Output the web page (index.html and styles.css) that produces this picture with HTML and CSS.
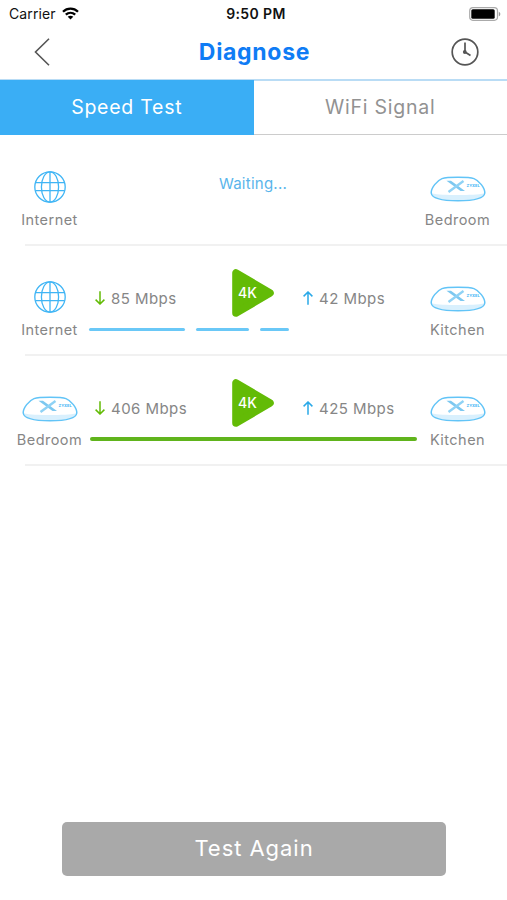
FILE: index.html
```html
<!DOCTYPE html>
<html lang="en">
<head>
  <meta charset="UTF-8" />
  <meta name="viewport" content="width=device-width, initial-scale=1" />
  <title>Diagnose</title>
  <link rel="stylesheet" href="styles.css">
</head>
<body>
  <svg class="defs" width="0" height="0">
    <symbol id="globe" viewBox="0 0 32 32">
      <g fill="none" stroke="#3fb5f5" stroke-width="1.3">
        <circle cx="16" cy="16" r="15.2" />
        <ellipse cx="16" cy="16" rx="8.6" ry="15.2" />
        <path d="M16 .8v30.4M1.6 11.7h28.8M1.6 19.7h28.8" />
      </g>
    </symbol>
    <symbol id="router" viewBox="0 0 56 26">
      <path d="M2 17.5C12 19.5 44 19.5 54 17.5C53 23 43 24.8 28 24.8S3 23 2 17.5z" fill="#d9f0fd" />
      <path d="M1.2 17C1 12 7 4.5 12 2.6C17 .9 39 .9 44 2.6C49 4.5 55 12 54.8 17C54 22.8 43 24.8 28 24.8S2 22.8 1.2 17z" fill="none" stroke="#62c4f7" stroke-width="1.5" />
      <path d="M16.5 4.8h4.5l14 10.2h-4.5z" fill="#7cc8f0" />
      <path d="M33.5 5l-15 11" stroke="#8fd2f5" stroke-width="2.4" />
      <text x="36.5" y="11.2" class="brand">ZYXEL</text>
    </symbol>
    <symbol id="play" viewBox="0 0 42 48">
      <path d="M4 4v40L38 24z" fill="#63bb06" stroke="#63bb06" stroke-width="7.6" stroke-linejoin="round" />
    </symbol>
    <symbol id="arrow" viewBox="0 0 10 14">
      <path d="M5 .3v12.6M.6 8.6L5 13l4.4-4.4" fill="none" stroke="currentColor" stroke-width="1.5" />
    </symbol>
  </svg>

  <div class="screen">
    <div class="status">
      <div class="carrier">
        <span>Carrier</span>
        <svg width="17" height="13" viewBox="0 0 17 13">
          <g fill="none" stroke="#000" stroke-width="2.3">
            <path d="M1 4.7C5.2 .6 11.8 .6 16 4.7" />
            <path d="M3.8 7.7C6.5 5.2 10.5 5.2 13.2 7.7" />
          </g>
          <path d="M5.7 9.7C7.3 8.3 9.7 8.3 11.3 9.7L8.5 12.6z" />
        </svg>
      </div>
      <div class="time">9:50 PM</div>
      <svg class="battery" width="32" height="14" viewBox="0 0 32 14">
        <rect x=".7" y=".7" width="27.8" height="12.6" rx="3.2" fill="#fff" stroke="#aaa" stroke-width="1.2" />
        <rect x="2.3" y="2.3" width="23.4" height="9.4" rx="1.5" />
        <path d="M29.8 4.7c2 .8 2 3.8 0 4.6z" fill="#999" />
      </svg>
    </div>

    <header class="nav">
      <svg width="16" height="28" viewBox="0 0 16 28">
        <path d="M15 .8L1.5 14L15 27.2" fill="none" stroke="#555" stroke-width="1.6" />
      </svg>
      <h1 class="title">Diagnose</h1>
      <svg width="28" height="28" viewBox="0 0 28 28">
        <circle cx="14" cy="14" r="12.8" fill="none" stroke="#555" stroke-width="1.7" />
        <path d="M14 4.5V14L19.5 17.5" fill="none" stroke="#555" stroke-width="1.7" />
        <circle cx="13.8" cy="14" r="1.9" fill="#555" />
      </svg>
    </header>

    <nav class="tabs">
      <div class="tab active">Speed Test</div>
      <div class="tab">WiFi Signal</div>
    </nav>

    <main class="links">
      <section class="link">
        <div class="device from">
          <svg class="icon" width="32" height="32"><use href="#globe" /></svg>
          <div class="name">Internet</div>
        </div>
        <div class="waiting">Waiting...</div>
        <div class="device to">
          <svg class="icon router" width="56" height="26"><use href="#router" /></svg>
          <div class="name">Bedroom</div>
        </div>
      </section>

      <section class="link">
        <div class="device from">
          <svg class="icon" width="32" height="32"><use href="#globe" /></svg>
          <div class="name">Internet</div>
        </div>
        <div class="result">
          <div class="stats">
            <div class="speed down"><svg width="10" height="14"><use href="#arrow" /></svg><span>85 Mbps</span></div>
            <div class="quality"><svg width="42" height="48"><use href="#play" /></svg><span>4K</span></div>
            <div class="speed up"><svg width="10" height="14"><use href="#arrow" /></svg><span>42 Mbps</span></div>
          </div>
          <div class="bar dashed"><i></i><i></i><i></i></div>
        </div>
        <div class="device to">
          <svg class="icon router" width="56" height="26"><use href="#router" /></svg>
          <div class="name">Kitchen</div>
        </div>
      </section>

      <section class="link">
        <div class="device from">
          <svg class="icon router" width="56" height="26"><use href="#router" /></svg>
          <div class="name">Bedroom</div>
        </div>
        <div class="result">
          <div class="stats">
            <div class="speed down"><svg width="10" height="14"><use href="#arrow" /></svg><span>406 Mbps</span></div>
            <div class="quality"><svg width="42" height="48"><use href="#play" /></svg><span>4K</span></div>
            <div class="speed up"><svg width="10" height="14"><use href="#arrow" /></svg><span>425 Mbps</span></div>
          </div>
          <div class="bar solid"></div>
        </div>
        <div class="device to">
          <svg class="icon router" width="56" height="26"><use href="#router" /></svg>
          <div class="name">Kitchen</div>
        </div>
      </section>
    </main>

    <button class="again">Test Again</button>
  </div>
</body>
</html>
```

FILE: styles.css
```css
* { box-sizing: border-box; }
body { margin: 0; background: #fff; color: #868686; font-family: Inter, "Liberation Sans", sans-serif; }
svg { display: block; flex: none; }
.defs { display: none; }
.screen { height: 900px; display: flex; flex-direction: column; padding-bottom: 24px; overflow: hidden; }

.status { height: 26px; display: grid; grid-template-columns: 1fr auto 1fr; align-items: center; padding: 1px 6px 0 9px; color: #111; font-size: 14px; }
.carrier { display: flex; align-items: center; gap: 6px; letter-spacing: 0.1px; }
.time { font-weight: 600; letter-spacing: 0.4px; padding-left: 2px; }
.battery { justify-self: end; }

.nav { height: 53px; display: flex; align-items: center; justify-content: space-between; padding: 0 28px 1px 34px; }
.title { margin: 0; padding-left: 8px; color: #0f7cf5; font-size: 23px; font-weight: 700; letter-spacing: 0.7px; }

.tabs { height: 56px; display: flex; border-top: 2px solid #b9dcf5; border-bottom: 1px solid #ccc; }
.tab { flex: 1; display: flex; align-items: center; justify-content: center; padding-bottom: 1px; font-size: 19.5px; letter-spacing: 0.75px; color: #929292; }
.tab.active { background: #3aaef5; color: #fff; margin: -1px 0; }

.link { height: 110px; display: grid; grid-template-columns: 89px 328px 90px; position: relative; }
.link::after { content: ""; position: absolute; left: 25px; right: 0; bottom: -1px; height: 2px; background: #f1f1f1; }
.device { display: flex; flex-direction: column; align-items: center; padding-top: 36px; }
.device.from { padding-left: 10px; }
.device.to { padding-right: 9px; }
.icon { margin-bottom: 8px; }
.router { margin: 5px 0 9px; }
.brand { fill: #3fb5f5; font-size: 4px; font-weight: 700; }
.name { font-size: 14.5px; line-height: 18px; letter-spacing: 0.45px; }
.waiting { padding-top: 39px; text-align: center; font-size: 15px; line-height: 20px; letter-spacing: 0.25px; color: #59b5eb; }

.stats { display: grid; grid-template-columns: 143px 71px 1fr; height: 83px; padding-top: 24px; }
.speed { height: 58px; display: flex; align-items: center; gap: 6px; font-size: 15px; letter-spacing: 0.45px; }
.down { padding-left: 6px; }
.down svg { color: #63bb06; }
.up svg { color: #2aa9e8; transform: rotate(180deg); }
.quality { display: grid; width: 42px; height: 48px; }
.quality svg, .quality span { grid-area: 1 / 1; }
.quality span { padding: 0 0 1px 6px; align-self: center; color: #fff; font-size: 14px; font-weight: 500; }
.bar { border-radius: 2px; }
.solid { height: 4px; margin-left: 1px; margin-top: -1px; background: #60b41c; }
.dashed { display: grid; grid-template-columns: 96px 53px 29px; column-gap: 11px; }
.dashed i { height: 3px; border-radius: 2px; background: #6ac8f7; }

.again { width: 384px; height: 54px; margin: auto auto 0 62px; padding: 0 0 2px; border: 0; border-radius: 5px; background: #a9a9a9; color: #fff; font: 22px Inter, "Liberation Sans", sans-serif; letter-spacing: 0.95px; }
```
